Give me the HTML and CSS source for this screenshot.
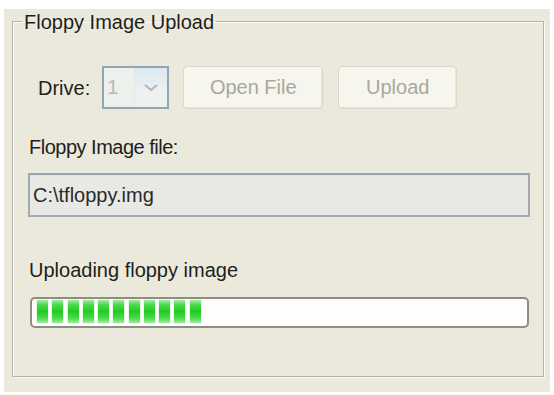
FILE: index.html
```html
<!DOCTYPE html>
<html>
<head>
<meta charset="utf-8">
<link rel="stylesheet" href="styles.css">
</head>
<body>
<div class="window">
  <fieldset class="group">
    <legend class="group-title">Floppy Image Upload</legend>
    <div class="group-body">
      <div class="drive-row">
        <span class="label">Drive:</span>
        <div class="select">
          <span class="select-value">1</span>
          <span class="select-btn">
            <svg width="16" height="10" viewBox="0 0 16 10"><polyline points="2,2 8,7 14,2" fill="none" stroke="#b0b6b8" stroke-width="2"/></svg>
          </span>
        </div>
        <button class="btn btn-open">Open File</button>
        <button class="btn btn-upload">Upload</button>
      </div>
      <div class="label label-file">Floppy Image file:</div>
      <div class="textbox">C:\tfloppy.img</div>
      <div class="label label-progress">Uploading floppy image</div>
      <div class="progress">
        <span class="chunk"></span><span class="chunk"></span><span class="chunk"></span><span class="chunk"></span><span class="chunk"></span><span class="chunk"></span><span class="chunk"></span><span class="chunk"></span><span class="chunk"></span><span class="chunk"></span><span class="chunk"></span>
      </div>
    </div>
  </fieldset>
</div>
</body>
</html>
```

FILE: styles.css
```css
html, body {
  margin: 0;
  padding: 0;
  background: #ffffff;
}
body {
  font-family: "Liberation Sans", Arial, sans-serif;
  font-size: 20px;
  color: #1e1e1e;
}
.window {
  margin: 9px 4px 3px 4px;
  height: 383px;
  box-sizing: border-box;
  background: #ebe9db;
  padding: 2px 6px 15px 8px;
  display: flex;
  flex-direction: column;
}
.group {
  flex: 1;
  margin: 0;
  min-width: 0;
  padding: 0 13px 0 15px;
  border: 1px solid #b3b1a3;
  box-shadow: 1px 1px 0 #fbfbf6, inset 1px 1px 0 #fbfbf6;
}
.group-title {
  margin-left: -6px;
  padding: 2px 2px 0 2px;
  line-height: 18px;
  color: #1e1e1e;
}
.group-body {
  padding-top: 35px;
  display: flex;
  flex-direction: column;
}
.label {
  line-height: 23px;
}
.drive-row {
  display: flex;
  align-items: center;
  height: 43px;
  padding-left: 10px;
}
.drive-row .label {
  margin-top: 2px;
}
.select {
  margin-left: 12px;
  width: 67px;
  height: 43px;
  box-sizing: border-box;
  border: 2px solid #93a4b4;
  background: #eef0ec;
  display: flex;
}
.select-value {
  width: 31px;
  padding-left: 3px;
  box-sizing: border-box;
  color: #b4bab7;
  line-height: 39px;
  border-right: 1px solid #e2e6e6;
}
.select-btn {
  flex: 1;
  display: flex;
  align-items: center;
  justify-content: center;
  background: linear-gradient(#dbe8f3, #eef1ef 60%);
}
.btn {
  height: 43px;
  box-sizing: border-box;
  border: 1px solid #d9d6c9;
  border-radius: 4px;
  background: #f6f5ee;
  color: #a9a89d;
  font-family: "Liberation Sans", Arial, sans-serif;
  font-size: 20px;
  padding: 0;
  box-shadow: inset -1px -1px 0 #e8e6da;
}
.btn-open {
  margin-left: 14px;
  width: 140px;
}
.btn-upload {
  margin-left: 15px;
  width: 119px;
}
.label-file {
  margin-top: 27px;
  padding-left: 1px;
  letter-spacing: -0.5px;
}
.textbox {
  margin-top: 14px;
  height: 44px;
  box-sizing: border-box;
  border: 2px solid #a3aab3;
  border-top-color: #99a3b0;
  background: #e8e9e4;
  box-shadow: inset 0 1px 0 #dde3ec;
  padding-left: 3px;
  line-height: 40px;
  color: #2a2a2a;
}
.label-progress {
  margin-top: 42px;
  padding-left: 1px;
}
.progress {
  margin: 15px 1px 0 2px;
  height: 31px;
  box-sizing: border-box;
  border: 2px solid #8d8d86;
  border-radius: 5px;
  background: #fefefc;
  padding: 1px 5px 0 5px;
  display: flex;
  align-items: flex-start;
  gap: 4.25px;
}
.chunk {
  width: 11px;
  height: 23px;
  background: linear-gradient(to bottom, #a6eaa6 0%, #48d948 22%, #22cc22 50%, #48d948 78%, #a6eaa6 100%);
  box-shadow: 0 0 1px #7ddc7d;
}
```
